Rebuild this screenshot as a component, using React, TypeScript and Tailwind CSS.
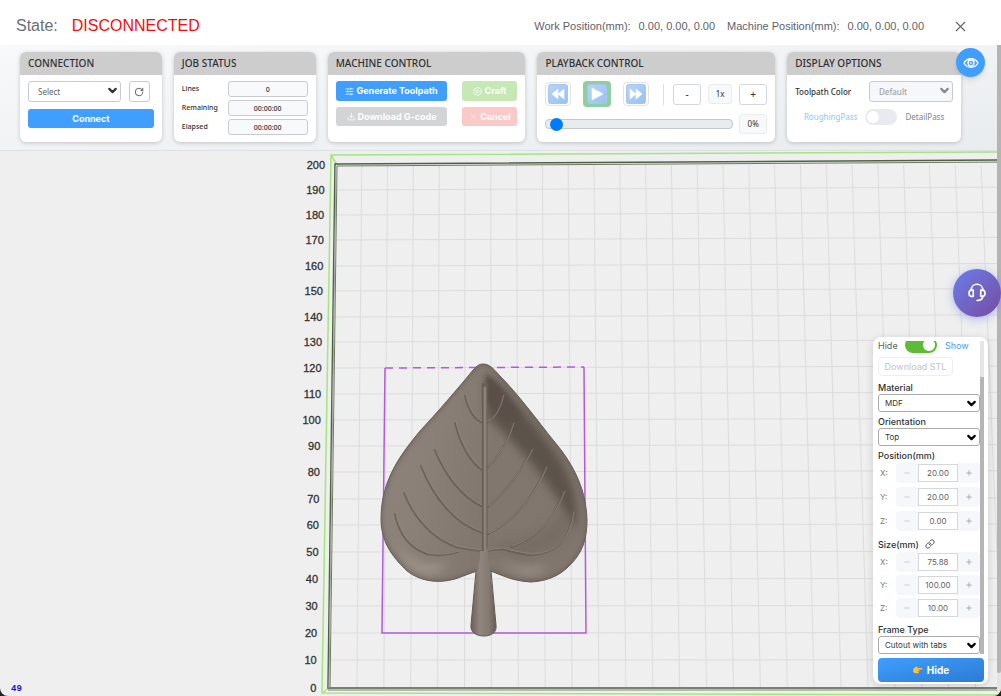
import React, { useState } from 'react';
import {
  ChevronDown,
  CirclePlay,
  Download,
  Link,
  Minus,
  Plus,
  RotateCw,
  SlidersHorizontal,
  X,
} from 'lucide-react';

const BED_TOP = 165;
const BED_BOTTOM = 688;

const axisLabels = [
  { value: 200, y: 165 },
  { value: 190, y: 190 },
  { value: 180, y: 215 },
  { value: 170, y: 240 },
  { value: 160, y: 266 },
  { value: 150, y: 291 },
  { value: 140, y: 317 },
  { value: 130, y: 342 },
  { value: 120, y: 368 },
  { value: 110, y: 394 },
  { value: 100, y: 420 },
  { value: 90, y: 446 },
  { value: 80, y: 472 },
  { value: 70, y: 499 },
  { value: 60, y: 525 },
  { value: 50, y: 552 },
  { value: 40, y: 579 },
  { value: 30, y: 606 },
  { value: 20, y: 633 },
  { value: 10, y: 660 },
  { value: 0, y: 688 },
];

const columns = Array.from({ length: 27 }, (_, i) => i + 1);

const veins = [
  'M465 396 Q470 418 483 423',
  'M455 423 Q464 458 483 471',
  'M435 450 Q452 492 483 507',
  'M421 466 Q443 520 483 533',
  'M404 493 Q421 534 456 547 Q470 550 483 551',
  'M395 514 Q401 545 427 554 Q442 557 458 552',
  'M503 396 Q498 418 486 423',
  'M513 424 Q506 450 488 467',
  'M532 450 Q515 484 488 507',
  'M546 468 Q526 515 488 534',
  'M564 492 Q549 534 511 547',
  'M573 513 Q568 554 530 555 Q512 552 502 549 Q492 549 484 552',
];

const LEAF =
  'M483 364 C476 364 472 372 464 381 C448 400 433 417 420 431 C402 453 381 479 381 519 C381 545 396 560 407 571 C420 581 437 584 455 579 C464 576 470 573 478 571 L490 571 C500 574 511 581 531 582 C551 581 563 573 572 563 C582 552 587 540 587 520 C586 485 570 460 553 440 C538 421 517 393 500 376 C493 368 489 364 483 364 Z';

const Leaf: React.FC = () => (
  <g>
    <defs>
      <linearGradient id="leafBase" x1="0" x2="1" y1="0" y2="0.2">
        <stop offset="0" stopColor="#8e847b" />
        <stop offset="0.3" stopColor="#8a8077" />
        <stop offset="0.6" stopColor="#81776e" />
        <stop offset="1" stopColor="#81766d" />
      </linearGradient>
      <linearGradient id="stem" x1="0" x2="1" y1="0" y2="0">
        <stop offset="0" stopColor="#6a6059" />
        <stop offset="0.35" stopColor="#91867e" />
        <stop offset="0.7" stopColor="#857b72" />
        <stop offset="1" stopColor="#665d56" />
      </linearGradient>
      <filter id="soft" x="-30%" y="-30%" width="160%" height="160%">
        <feGaussianBlur stdDeviation="5" />
      </filter>
      <filter id="softer" x="-30%" y="-30%" width="160%" height="160%">
        <feGaussianBlur stdDeviation="2" />
      </filter>
      <clipPath id="leafClip">
        <path d={LEAF} />
      </clipPath>
    </defs>
    <path d={LEAF} fill="url(#leafBase)" />
    <g clipPath="url(#leafClip)">
      <path
        d="M486 374 C506 388 538 428 556 453 C570 474 580 496 576 528 C568 522 563 504 552 491 C534 464 508 436 486 416 Z"
        fill="#5c534c"
        filter="url(#soft)"
      />
      <path d="M486 374 C500 384 512 402 522 417 L508 423 L487 402 Z" fill="#5a5049" filter="url(#softer)" />
      <path d="M394 540 C404 560 425 572 447 563 C438 578 408 578 394 540 Z" fill="#a89e95" filter="url(#soft)" />
      <path d="M500 558 C512 570 530 572 545 566 C540 578 510 574 500 558 Z" fill="#b0a69e" filter="url(#soft)" />
      <path
        d="M488 544 C510 560 548 562 572 530 L562 510 C546 535 515 546 488 544 Z"
        fill="#71675f"
        filter="url(#soft)"
        opacity="0.6"
      />
      <path d={LEAF} fill="none" stroke="#645b54" strokeWidth="2" filter="url(#softer)" />
    </g>
    <path d={LEAF} fill="none" stroke="#665d56" strokeWidth="1" />
    <g fill="none" strokeLinecap="round">
      {veins.map((d) => (
        <g key={d} opacity="0.75">
          <path d={d} stroke="#655b54" strokeWidth="2" />
          <path d={d} stroke="#92877e" strokeWidth="1" transform="translate(1 -1)" />
        </g>
      ))}
      <path d="M483 384 L483 560" stroke="#635a53" strokeWidth="2" />
      <path d="M485 388 L485 575" stroke="#8d8279" strokeWidth="3" />
      <path d="M487 384 L487 548" stroke="#6a6059" strokeWidth="1" />
    </g>
    <path
      d="M480 551 C481 560 477 568 476 574 L471 625 C470 632 476 636 484 636 C492 636 497 632 496 625 L491 574 C490 568 487 560 488 551 Z"
      fill="url(#stem)"
    />
    <path d="M476 571 L471 625 C470 632 476 636 484 636 C492 636 497 632 496 625 L491 571" fill="none" stroke="#625952" />
  </g>
);

const Scene: React.FC = () => (
  <svg
    className="absolute inset-0 h-full w-full"
    viewBox="0 151 997 545"
    preserveAspectRatio="xMidYMid slice"
    role="img"
    aria-label="Work area"
  >
    <g stroke="#dcdcdc" strokeWidth="1">
      {axisLabels.slice(1, -1).map(({ value, y }) => (
        <line key={value} x1={336 - (y - BED_TOP) / 70} y1={y} x2="1010" y2={y - (BED_BOTTOM - y) / 170} />
      ))}
      {columns.map((n) => (
        <line key={n} x1={336 + n * 25.8} y1={BED_TOP} x2={330 + n * 26.9} y2={BED_BOTTOM} />
      ))}
    </g>
    <g fill="none">
      <path d="M1010 152 L331 155 L322 693 L1010 695 M331 155 L337 165 M322 693 L329 688" stroke="#a4e67c" strokeWidth="1.5" />
      <path d="M1010 160 L335 164 L328 688 L1010 688" stroke="#4f6144" strokeWidth="1.5" />
      <path d="M1010 162 L337 166 L330 688" stroke="#6d7866" />
      <path d="M328 690 L1010 690" stroke="#7b8a72" />
      <path d="M336 166 L329 688" stroke="#a3aa9e" />
    </g>
    <g fill="#333" fontFamily="Liberation Sans, sans-serif" fontSize="11" textAnchor="end">
      {axisLabels.map(({ value, y }) => (
        <text key={value} x={325 - (y - BED_TOP) / 60} y={y + 4} stroke="#333" strokeWidth="0.3">
          {value}
        </text>
      ))}
    </g>
    <g fill="none" stroke="#b558e0" strokeWidth="1.5">
      <path d="M385 368 L584 367" strokeDasharray="8 6" />
      <path d="M385 368 L382 633 L586 633 L584 367" />
    </g>
    <Leaf />
  </svg>
);

const Card: React.FC<{ title: string; children: React.ReactNode }> = ({ title, children }) => (
  <section className="h-[90px] overflow-hidden rounded-md bg-white shadow-[0_1px_4px_rgba(0,0,0,0.2)]">
    <h2 className="flex h-[23px] items-center bg-[#cdcdcd] px-2 text-[10px] font-medium text-[#303133]">{title}</h2>
    <div className="px-2 pt-1.5">{children}</div>
  </section>
);

interface SelectProps {
  label: string;
  value: string;
  disabled?: boolean;
  panel?: boolean;
}

const Select: React.FC<SelectProps> = ({ label, value, disabled, panel }) => (
  <div className="relative w-full">
    <select
      aria-label={label}
      disabled={disabled}
      className={
        panel
          ? 'block h-[18px] w-full appearance-none rounded-[3px] border border-[#aaa] bg-white pl-1.5 font-[Inter,sans-serif] text-[8px] text-[#333]'
          : 'block h-[21px] w-full appearance-none rounded-[3px] border border-[#c8ccd2] bg-white pl-[9px] text-[8px] text-[#606266] disabled:bg-[#f5f7fa] disabled:text-[#a0a3a9]'
      }
    >
      <option>{value}</option>
    </select>
    <ChevronDown
      size={13}
      strokeWidth={4}
      className={`pointer-events-none absolute right-0.5 top-[3px] ${
        disabled ? 'text-[#888]' : panel ? 'text-black' : 'text-[#333]'
      }`}
    />
  </div>
);

const playIcons = {
  rewind: 'M10 5v10l-6-5zM16 5v10l-6-5z',
  play: 'M5 4v12l11-6z',
  forward: 'M4 5v10l6-5zM10 5v10l6-5z',
};

const PlayIcon: React.FC<{ name: keyof typeof playIcons }> = ({ name }) => (
  <svg viewBox="0 0 20 20" className="h-5 w-5" aria-hidden="true">
    <defs>
      <linearGradient id={`${name}Fill`} x1="0" x2="1" y1="0" y2="1">
        <stop offset="0" stopColor="#b5d6fa" />
        <stop offset="1" stopColor="#98c0f3" />
      </linearGradient>
    </defs>
    <rect x="0.5" y="0.5" width="19" height="19" rx="2" fill={`url(#${name}Fill)`} stroke="#a9c5e8" />
    <path d={playIcons[name]} fill="#fff" stroke="#fff" strokeWidth="0.6" strokeLinejoin="round" />
  </svg>
);

const Stepper: React.FC<{ axis: string; group: string; initial: number }> = ({ axis, group, initial }) => {
  const [value, setValue] = useState(initial);
  return (
    <div className="flex h-5 items-center">
      <span className="w-[18px] pl-0.5 text-[8px] text-[#777]">{axis}:</span>
      <button
        aria-label={`Decrease ${group} ${axis}`}
        onClick={() => setValue(value - 1)}
        className="flex h-5 w-[22px] items-center justify-center rounded-l bg-[#f5f7fa] text-[#b8bbc0]"
      >
        <Minus size={8} />
      </button>
      <input
        aria-label={`${group} ${axis}`}
        value={value.toFixed(2)}
        readOnly
        className="h-[18px] w-10 border border-[#d4d7dc] bg-white text-center text-[8px] text-[#606266]"
      />
      <button
        aria-label={`Increase ${group} ${axis}`}
        onClick={() => setValue(value + 1)}
        className="flex h-5 flex-1 items-center justify-center rounded-r bg-[#f5f7fa] text-[#909399]"
      >
        <Plus size={8} />
      </button>
    </div>
  );
};

const ModelPanel: React.FC = () => (
  <aside className="absolute bottom-3 right-[9px] w-[115px] rounded-lg bg-white px-1 pb-0.5 pt-1 pl-[5px] font-[Inter,sans-serif] shadow-[0_2px_8px_rgba(0,0,0,0.15)]">
    <div className="flex">
      <div className="flex h-[313px] min-w-0 flex-1 flex-col justify-end overflow-hidden text-[9px] leading-3 text-[#303133]">
        <div className="flex h-4 shrink-0 items-center leading-none">
          <span className="w-[27px] text-[#606266]">Hide</span>
          <label className="relative h-4 w-8">
            <input type="checkbox" defaultChecked aria-label="Show model" className="block h-4 w-8 appearance-none rounded-full bg-[#5dbb35]" />
            <span className="absolute right-0.5 top-0.5 h-3 w-3 rounded-full bg-white" />
          </label>
          <a href="#show" className="pl-2 text-[#409eff]">Show</a>
        </div>
        <button disabled className="my-1 h-[19px] w-[75px] shrink-0 rounded-sm border border-[#ebeef5] text-[#c0c4cc]">
          Download STL
        </button>
        <h3 className="mt-0.5 h-3 font-medium">Material</h3>
        <Select panel label="Material" value="MDF" />
        <h3 className="mt-1 h-3 font-medium">Orientation</h3>
        <Select panel label="Orientation" value="Top" />
        <h3 className="mb-px mt-1 h-3 font-medium">Position(mm)</h3>
        <div className="flex flex-col gap-1">
          <Stepper group="Position" axis="X" initial={20} />
          <Stepper group="Position" axis="Y" initial={20} />
          <Stepper group="Position" axis="Z" initial={0} />
        </div>
        <h3 className="mb-px mt-2 flex h-3 gap-1.5 font-medium">
          Size(mm) <Link size={10} />
        </h3>
        <div className="flex flex-col gap-[3px]">
          <Stepper group="Size" axis="X" initial={75.88} />
          <Stepper group="Size" axis="Y" initial={100} />
          <Stepper group="Size" axis="Z" initial={10} />
        </div>
        <h3 className="mt-1.5 h-3 font-medium">Frame Type</h3>
        <Select panel label="Frame Type" value="Cutout with tabs" />
      </div>
      <div className="flex w-1 flex-col justify-end bg-[#e6e6e6]">
        <div className="h-[277px] bg-[#b5b5b5]" />
      </div>
    </div>
    <button className="mt-1 flex h-6 w-full items-center justify-center gap-1 rounded bg-linear-to-br from-[#409eff] to-[#2b7cd3] text-[10px] font-bold text-white">
      <svg viewBox="0 0 20 16" className="h-2 w-2.5" aria-hidden="true">
        <path d="M1 5 L7 1 L10 4 L18 4 Q20 6 18 7 L12 7 L13 9 L12 11 L12 13 L9 15 L3 14 L0 11 Z" fill="#fcc23c" />
        <path d="M8 8 L13 8 M8 11 L12 11" stroke="#e48a20" />
      </svg>
      Hide
    </button>
  </aside>
);

const App: React.FC = () => {
  const [progress, setProgress] = useState(2);

  return (
    <div className="min-h-screen bg-[#222] font-['Noto_Sans',sans-serif]">
      <div className="flex min-h-screen flex-col overflow-hidden rounded-b-lg bg-[#efefef]">
        <header className="flex h-[45px] items-center justify-between bg-white pl-4 pr-8 pt-[7px] font-['Liberation_Sans',Arial,sans-serif] text-[#6b6e73]">
          <div className="flex gap-3.5 text-base">
            <span>State:</span>
            <span className="text-[#f40d0d]">DISCONNECTED</span>
          </div>
          <div className="flex items-center gap-3 text-[11px] font-medium text-[#5f6267]">
            <span className="flex gap-2">
              <span>Work Position(mm):</span>
              <span>0.00, 0.00, 0.00</span>
            </span>
            <span className="flex gap-2">
              <span>Machine Position(mm):</span>
              <span>0.00, 0.00, 0.00</span>
            </span>
            <button aria-label="Close" className="ml-4">
              <X size={17} strokeWidth={1.5} />
            </button>
          </div>
        </header>

        <div className="relative flex flex-1">
          <main className="flex min-w-0 flex-1 flex-col">
            <div className="grid grid-cols-[142fr_142fr_198fr_238fr_174fr] gap-3 border-b border-[#dcdfe6] bg-linear-to-br from-[#f8f9fa] to-[#e9ecef] pb-2 pl-5 pr-9 pt-[7px]">
              <Card title="CONNECTION">
                <div className="flex gap-2 pr-1">
                  <Select label="Port" value="Select" />
                  <button
                    aria-label="Refresh ports"
                    className="flex h-[21px] w-[21px] shrink-0 items-center justify-center rounded-[3px] border border-[#c8ccd2] text-[#444]"
                  >
                    <RotateCw size={10} />
                  </button>
                </div>
                <button className="mt-[7px] h-[19px] w-full rounded-[3px] bg-[#409eff] font-[Inter,sans-serif] text-[9px] font-bold text-white">
                  Connect
                </button>
              </Card>

              <Card title="JOB STATUS">
                <div className="flex flex-col gap-[3px] text-[7px] font-medium text-[#303133]">
                  {[
                    ['Lines', '0'],
                    ['Remaining', '00:00:00'],
                    ['Elapsed', '00:00:00'],
                  ].map(([label, value]) => (
                    <label key={label} className="flex items-center justify-between">
                      {label}
                      <input
                        readOnly
                        value={value}
                        className="h-4 w-20 rounded-[3px] border border-[#c8ccd2] bg-[#f8f9fb] text-center"
                      />
                    </label>
                  ))}
                </div>
              </Card>

              <Card title="MACHINE CONTROL">
                <div className="grid grid-cols-[1fr_55px] gap-x-[15px] gap-y-1.5 font-[Inter,sans-serif] text-[9px] font-bold text-white">
                  <button className="flex h-5 items-center justify-center gap-0.5 rounded-[3px] bg-[#409eff]">
                    <SlidersHorizontal size={9} /> Generate Toolpath
                  </button>
                  <button disabled className="flex h-5 items-center justify-center gap-0.5 rounded-[3px] bg-[#c5e8b5]">
                    <CirclePlay size={9} /> Craft
                  </button>
                  <button disabled className="flex h-[19px] items-center justify-center gap-0.5 rounded-[3px] bg-[#d3d4d6]">
                    <Download size={9} /> Download G-code
                  </button>
                  <button disabled className="flex h-[19px] items-center justify-center gap-0.5 rounded-[3px] bg-[#fcc9c9]">
                    <X size={9} /> Cancel
                  </button>
                </div>
              </Card>

              <Card title="PLAYBACK CONTROL">
                <div className="flex h-[26px] items-center justify-between text-[8px] text-[#303133]">
                  <div className="flex items-center gap-3">
                    <button aria-label="Rewind" className="flex h-6 w-[26px] items-center justify-center rounded border border-[#e0e4ea]">
                      <PlayIcon name="rewind" />
                    </button>
                    <button aria-label="Play" className="flex h-[26px] w-7 items-center justify-center rounded bg-[#8fce9d]">
                      <PlayIcon name="play" />
                    </button>
                    <button aria-label="Fast forward" className="flex h-6 w-[26px] items-center justify-center rounded border border-[#e0e4ea]">
                      <PlayIcon name="forward" />
                    </button>
                  </div>
                  <div className="flex items-center gap-[7px]">
                    <span className="mr-0.5 h-[21px] w-px bg-[#dcdfe6]" />
                    <button className="h-[21px] w-7 rounded-[3px] border border-[#d4d7dc] text-[10px]">-</button>
                    <output className="flex h-5 w-6 items-center justify-center rounded-[3px] border border-[#e8ebf0] bg-[#f8f9fb]">1x</output>
                    <button className="h-[21px] w-7 rounded-[3px] border border-[#d4d7dc] text-[10px]">+</button>
                  </div>
                </div>
                <div className="mt-[7px] flex items-center gap-1.5 text-[8px] text-[#303133]">
                  <input
                    type="range"
                    aria-label="Playback progress"
                    value={progress}
                    onChange={(e) => setProgress(Number(e.target.value))}
                    className="h-2.5 min-w-0 flex-1 appearance-none rounded border border-[#c4c7cc] bg-[#e9ebed] [&::-webkit-slider-thumb]:h-[13px] [&::-webkit-slider-thumb]:w-[13px] [&::-webkit-slider-thumb]:appearance-none [&::-webkit-slider-thumb]:rounded-full [&::-webkit-slider-thumb]:bg-[#007bff]"
                  />
                  <output className="flex h-5 w-7 items-center justify-center rounded-[3px] border border-[#e8ebf0] bg-[#f8f9fb]">0%</output>
                </div>
              </Card>

              <Card title="DISPLAY OPTIONS">
                <div className="flex items-center justify-between text-[8px] font-medium text-[#303133]">
                  <span>Toolpath Color</span>
                  <div className="w-21">
                    <Select disabled label="Toolpath Color" value="Default" />
                  </div>
                </div>
                <div className="mt-[7px] flex items-center justify-center gap-2 text-[8px] text-[#808389]">
                  <span className="text-[#8cc5ff]">RoughingPass</span>
                  <label className="relative h-4 w-8">
                    <input type="checkbox" disabled aria-label="Detail pass" className="block h-4 w-8 appearance-none rounded-full bg-[#e8eaef]" />
                    <span className="absolute left-0.5 top-0.5 h-3 w-3 rounded-full bg-white" />
                  </label>
                  <span>DetailPass</span>
                </div>
              </Card>
            </div>

            <div className="relative flex-1">
              <Scene />
              <span className="absolute bottom-0.5 left-[11px] font-['Liberation_Mono',monospace] text-[9px] font-bold leading-[10px] text-[#1414d8]">
                49
              </span>
              <ModelPanel />
            </div>
          </main>

          <div className="w-1 bg-[#e4e4e4] pb-[23px]">
            <div className="h-full rounded-b bg-[#b4b4b4]" />
          </div>

          <button
            aria-label="Toggle toolbar"
            className="absolute right-4 top-[3px] flex h-[29px] w-[29px] items-center justify-center rounded-full bg-[#409eff] text-white shadow-md"
          >
            <svg viewBox="0 0 24 24" className="h-4 w-4" fill="none" stroke="currentColor" strokeWidth="2" aria-hidden="true">
              <path d="M1.5 12 C6 3.5 18 3.5 22.500 12 C18 20.500 6 20.500 1.500 12 Z" />
              <circle cx="12" cy="12" r="4.500" />
              <circle cx="12" cy="12" r="1.200" strokeWidth="1" />
            </svg>
          </button>
          <button
            aria-label="Support"
            className="absolute right-0 top-56 flex h-12 w-12 items-center justify-center rounded-full bg-linear-to-br from-[#667eea] to-[#764ba2] text-white shadow-[0_2px_8px_rgba(102,126,234,0.5)]"
          >
            <svg
              viewBox="0 0 24 24"
              className="h-5 w-5"
              fill="none"
              stroke="currentColor"
              strokeWidth="2"
              strokeLinecap="round"
              strokeLinejoin="round"
              aria-hidden="true"
            >
              <path d="M5 9 C5 -1 19 -1 19 9" />
              <path d="M5 8.500 H7.500 V16 H5 C1.500 15.500 1.500 9 5 8.500 Z" />
              <path d="M19 8.500 H16.500 V16 H19 C22.500 15.500 22.500 9 19 8.500 Z" />
              <path d="M19 16 C19 20 16 21 12 21" />
            </svg>
          </button>
        </div>
      </div>
    </div>
  );
};

export default App;
